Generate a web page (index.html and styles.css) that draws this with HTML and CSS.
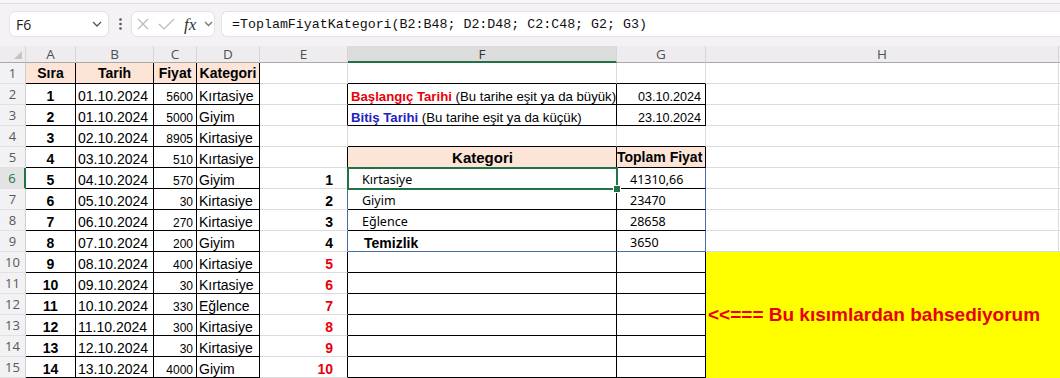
FILE: index.html
```html
<!DOCTYPE html>
<html lang="tr">
<head>
    <meta charset="UTF-8">
    <title>ToplamFiyatKategori</title>
    <link rel="stylesheet" href="styles.css">
</head>
<body>
    <div class="top-strip"></div>

    <div class="formula-bar">
        <div class="name-box">
            <span>F6</span>
            <svg class="chev" width="10" height="6" viewBox="0 0 10 6"><path d="M1 1 L5 5 L9 1" /></svg>
        </div>
        <div class="dots">
            <svg width="3" height="12" viewBox="0 0 3 12"><circle cx="1.5" cy="1.5" r="1.3"/><circle cx="1.5" cy="6" r="1.3"/><circle cx="1.5" cy="10.5" r="1.3"/></svg>
        </div>
        <div class="fx-box">
            <svg class="ic-x" width="12" height="12" viewBox="0 0 12 12"><path d="M1 1 L11 11 M11 1 L1 11" /></svg>
            <svg class="ic-ok" width="17" height="12" viewBox="0 0 17 12"><path d="M1 6 L6 11 L16 1" /></svg>
            <span class="fx">fx</span>
            <svg class="chev small" width="9" height="6" viewBox="0 0 9 6"><path d="M1 1 L4.5 4.5 L8 1" /></svg>
        </div>
        <div class="formula">=ToplamFiyatKategori(B2:B48; D2:D48; C2:C48; G2; G3)</div>
    </div>

    <div class="sheet">
        <div class="row">
            <div class="corner"><span class="tri"></span></div>
            <div class="hd">A</div><div class="hd">B</div><div class="hd">C</div><div class="hd">D</div>
            <div class="hd">E</div><div class="hd sel">F</div><div class="hd">G</div><div class="hd">H</div><div class="hd"></div>
        </div>

        <div class="row">
            <div class="rh">1</div>
            <div class="c th br bb">Sıra</div><div class="c th br bb">Tarih</div><div class="c th br bb">Fiyat</div><div class="c th br bb">Kategori</div>
            <div class="c"></div><div class="c bb"></div><div class="c bb"></div><div class="c"></div><div class="c"></div>
        </div>

        <div class="row">
            <div class="rh">2</div>
            <div class="c num br bb">1</div><div class="c br bb">01.10.2024</div><div class="c price br bb">5600</div><div class="c br bb">Kırtasiye</div>
            <div class="c br"></div>
            <div class="c lbl br bb"><b class="red">Başlangıç Tarihi</b>&nbsp;(Bu tarihe eşit ya da büyük)</div>
            <div class="c val br bb">03.10.2024</div>
            <div class="c"></div><div class="c"></div>
        </div>

        <div class="row">
            <div class="rh">3</div>
            <div class="c num br bb">2</div><div class="c br bb">01.10.2024</div><div class="c price br bb">5000</div><div class="c br bb">Giyim</div>
            <div class="c br"></div>
            <div class="c lbl br bb"><b class="blue">Bitiş Tarihi</b>&nbsp;(Bu tarihe eşit ya da küçük)</div>
            <div class="c val br bb">23.10.2024</div>
            <div class="c"></div><div class="c"></div>
        </div>

        <div class="row">
            <div class="rh">4</div>
            <div class="c num br bb">3</div><div class="c br bb">02.10.2024</div><div class="c price br bb">8905</div><div class="c br bb">Kirtasiye</div>
            <div class="c"></div><div class="c bb"></div><div class="c bb"></div><div class="c"></div><div class="c"></div>
        </div>

        <div class="row">
            <div class="rh">5</div>
            <div class="c num br bb">4</div><div class="c br bb">03.10.2024</div><div class="c price br bb">510</div><div class="c br bb">Kırtasiye</div>
            <div class="c br"></div>
            <div class="c kh ctr br bb">Kategori</div>
            <div class="c kh sm br bb">Toplam Fiyat</div>
            <div class="c"></div><div class="c"></div>
        </div>

        <div class="row">
            <div class="rh on">6</div>
            <div class="c num br bb">5</div><div class="c br bb">04.10.2024</div><div class="c price br bb">570</div><div class="c br bb">Giyim</div>
            <div class="c idx blr">1</div>
            <div class="c kat br bb active">Kırtasiye</div>
            <div class="c tot blr bb">41310,66</div>
            <div class="c"></div><div class="c"></div>
        </div>

        <div class="row">
            <div class="rh">7</div>
            <div class="c num br bb">6</div><div class="c br bb">05.10.2024</div><div class="c price br bb">30</div><div class="c br bb">Kirtasiye</div>
            <div class="c idx blr">2</div>
            <div class="c kat br bb">Giyim</div>
            <div class="c tot blr bb">23470</div>
            <div class="c"></div><div class="c"></div>
        </div>

        <div class="row">
            <div class="rh">8</div>
            <div class="c num br bb">7</div><div class="c br bb">06.10.2024</div><div class="c price br bb">270</div><div class="c br bb">Kirtasiye</div>
            <div class="c idx blr">3</div>
            <div class="c kat br bb">Eğlence</div>
            <div class="c tot blr bb">28658</div>
            <div class="c"></div><div class="c"></div>
        </div>

        <div class="row">
            <div class="rh">9</div>
            <div class="c num br bb">8</div><div class="c br bb">07.10.2024</div><div class="c price br bb">200</div><div class="c br bb">Giyim</div>
            <div class="c idx blr">4</div>
            <div class="c temiz br blb">Temizlik</div>
            <div class="c tot blr blb">3650</div>
            <div class="c"></div><div class="c"></div>
        </div>

        <div class="row">
            <div class="rh">10</div>
            <div class="c num br bb">9</div><div class="c br bb">08.10.2024</div><div class="c price br bb">400</div><div class="c br bb">Kirtasiye</div>
            <div class="c idx red br">5</div><div class="c br bb"></div><div class="c br bb"></div>
            <div class="note">&lt;&lt;=== Bu kısımlardan bahsediyorum</div>
        </div>

        <div class="row">
            <div class="rh">11</div>
            <div class="c num br bb">10</div><div class="c br bb">09.10.2024</div><div class="c price br bb">30</div><div class="c br bb">Kırtasiye</div>
            <div class="c idx red br">6</div><div class="c br bb"></div><div class="c br bb"></div>
        </div>

        <div class="row">
            <div class="rh">12</div>
            <div class="c num br bb">11</div><div class="c br bb">10.10.2024</div><div class="c price br bb">330</div><div class="c br bb">Eğlence</div>
            <div class="c idx red br">7</div><div class="c br bb"></div><div class="c br bb"></div>
        </div>

        <div class="row">
            <div class="rh">13</div>
            <div class="c num br bb">12</div><div class="c br bb">11.10.2024</div><div class="c price br bb">300</div><div class="c br bb">Kirtasiye</div>
            <div class="c idx red br">8</div><div class="c br bb"></div><div class="c br bb"></div>
        </div>

        <div class="row">
            <div class="rh">14</div>
            <div class="c num br bb">13</div><div class="c br bb">12.10.2024</div><div class="c price br bb">30</div><div class="c br bb">Kirtasiye</div>
            <div class="c idx red br">9</div><div class="c br bb"></div><div class="c br bb"></div>
        </div>

        <div class="row">
            <div class="rh">15</div>
            <div class="c num br bb">14</div><div class="c br bb">13.10.2024</div><div class="c price br bb">4000</div><div class="c br bb">Giyim</div>
            <div class="c idx red br">10</div><div class="c br bb"></div><div class="c br bb"></div>
        </div>
    </div>
</body>
</html>
```

FILE: styles.css
```css
* { box-sizing: border-box; }

body {
    margin: 0;
    background: #fff;
    font-family: "Liberation Sans", Arial, sans-serif;
    overflow: hidden;
}

/* formula bar */
.top-strip {
    height: 4px;
    background: #f8f6f8;
    border-bottom: 1px solid #dedcde;
}
.formula-bar {
    height: 42px;
    background: #f4f2f5;
    display: flex;
    align-items: flex-start;
    padding: 7px 0 0 9px;
}
.name-box {
    width: 100px;
    height: 26px;
    background: #fff;
    border: 1px solid #e4e2e4;
    border-radius: 6px;
    display: flex;
    align-items: center;
    justify-content: space-between;
    padding: 0 6px 0 6px;
    font: 14px "Open Sans", sans-serif;
    color: #222;
}
.chev path { fill: none; stroke: #555; stroke-width: 1.3; }
.chev.small path { stroke: #777; }
.dots {
    width: 22px;
    height: 26px;
    display: flex;
    align-items: center;
    justify-content: center;
}
.dots circle { fill: #555; }
.fx-box {
    width: 84px;
    height: 26px;
    background: #fff;
    border: 1px solid #e4e2e4;
    border-radius: 6px;
    display: flex;
    align-items: center;
    padding-left: 5px;
}
.ic-x path, .ic-ok path { fill: none; stroke: #b9b9b9; stroke-width: 1.2; }
.ic-ok { margin-left: 9px; }
.fx {
    margin-left: 9px;
    width: 16px;
    font: italic 17px "Liberation Serif", serif;
    color: #333;
    line-height: 1;
}
.fx-box .small { margin-left: 4px; }
.formula {
    flex: 1;
    margin-left: 6px;
    height: 26px;
    background: #fff;
    border: 1px solid #e4e2e4;
    border-right: none;
    border-radius: 6px 0 0 6px;
    padding-left: 10px;
    display: flex;
    align-items: center;
    font: 13.3px "Liberation Mono", monospace;
    color: #111;
    white-space: nowrap;
}

/* sheet grid */
.sheet {
    display: grid;
    grid-template-columns: 26px 50px 78px 43px 63px 88px 269px 89px 353px 1fr;
    grid-template-rows: 17px repeat(15, 21px);
}
.row { display: contents; }

.corner, .hd {
    background: #eeecef;
    border-right: 1px solid #d6d6d6;
    border-bottom: 1px solid #a9a9a9;
}
.corner {
    position: relative;
}
.corner .tri {
    position: absolute;
    right: 3px;
    bottom: 3px;
    width: 0;
    height: 0;
    border-left: 8px solid transparent;
    border-bottom: 8px solid #c4c4c4;
}
.hd {
    display: flex;
    align-items: center;
    justify-content: center;
    font: 13.5px "Open Sans", sans-serif;
    color: #505050;
}
.hd.sel {
    background: #dcdcdc;
    border-bottom: 2px solid #217346;
    color: #333;
}

.rh {
    background: #f2f1f3;
    border-right: 1px solid #cfcfcf;
    border-bottom: 1px solid #e1e1e1;
    display: flex;
    align-items: center;
    justify-content: center;
    font: 13px "Open Sans", sans-serif;
    color: #585858;
}
.rh.on {
    background: #e3e3e3;
    color: #217346;
    border-right: 2px solid #217346;
}

.c {
    border-right: 1px solid #dcdcdc;
    border-bottom: 1px solid #dcdcdc;
    display: flex;
    align-items: flex-end;
    padding: 0 2px;
    font-size: 14px;
    color: #000;
    white-space: nowrap;
    overflow: hidden;
    min-width: 0;
}
.br { border-right-color: #000; }
.bb { border-bottom-color: #000; }
.blr { border-right-color: #4a6eab; }
.blb { border-bottom-color: #4a6eab; }

.ctr { justify-content: center; }
.th {
    background: #fce4d6;
    font-weight: bold;
    justify-content: center;
    align-items: center;
}
.num { font-weight: bold; justify-content: center; }
.price { font-size: 12px; justify-content: flex-end; padding-right: 3px; }
.idx { font-weight: bold; justify-content: flex-end; padding-right: 14px; }
.red { color: #e8000b; }
.blue { color: #2323c2; }

.lbl { font-size: 13.2px; padding-left: 3px; }
.val { font-size: 12.6px; justify-content: flex-end; padding-right: 4px; }

.kh {
    background: #fce4d6;
    font-size: 15px;
    font-weight: bold;
    align-items: center;
    padding: 0 0 0 1px;
}
.kh.sm { font-size: 14px; padding-left: 0; }
.kat, .tot {
    font: 12.5px "Noto Sans", sans-serif;
}
.kat { padding-left: 14px; }
.tot { padding-left: 13px; }
.temiz { font-weight: bold; padding-left: 16px; }

.active { position: relative; overflow: visible; }
.active::after {
    content: "";
    position: absolute;
    left: -1px;
    top: -1px;
    right: -2px;
    bottom: -2px;
    border: 2px solid #217346;
}
.active::before {
    content: "";
    position: absolute;
    right: -5px;
    bottom: -5px;
    width: 6px;
    height: 6px;
    background: #217346;
    border: 1px solid #fff;
    z-index: 2;
}

.note {
    grid-column: span 2;
    grid-row: span 6;
    background: #ffff00;
    display: flex;
    align-items: center;
    padding-left: 2px;
    font-size: 19px;
    font-weight: bold;
    color: #e8000b;
    white-space: nowrap;
}
```
